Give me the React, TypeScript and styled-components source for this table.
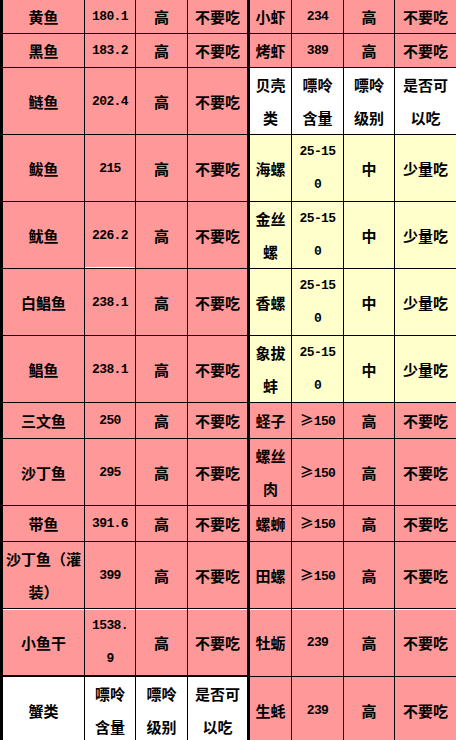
import styled, { createGlobalStyle, css } from "styled-components";

type Tone = "pink" | "yellow" | "white";

type CellData = {
    text: string;
    tone: Tone;
    num?: boolean;
    whiteTop?: boolean;
    whiteBottom?: boolean;
    thickBottom?: boolean;
};

const tones: Record<Tone, string> = {
    pink: "#ff9999",
    yellow: "#ffffcc",
    white: "#ffffff",
};

const GlobalStyle = createGlobalStyle`
    html, body {
        margin: 0;
        padding: 0;
        background: #ffffff;
    }
    * {
        box-sizing: border-box;
    }
`;

const Viewport = styled.div`
    width: 456px;
    height: 740px;
    overflow: hidden;
`;

const Sheet = styled.div`
    display: grid;
    grid-template-columns: 85px 51px 52px 62px 42px 52px 51px 62px;
    width: 457px;
    font-family: "Noto Sans CJK SC", "Noto Sans", sans-serif;
    font-weight: 700;
    font-size: 15px;
    line-height: 33px;
    color: #000;
`;

type CellProps = {
    $tone: Tone;
    $num?: boolean;
    $first?: boolean;
    $divider?: boolean;
    $whiteTop?: boolean;
    $whiteBottom?: boolean;
    $thickBottom?: boolean;
};

const Cell = styled.div<CellProps>`
    display: flex;
    align-items: center;
    justify-content: center;
    text-align: center;
    background: ${(p) => tones[p.$tone]};
    border-right: ${(p) => (p.$divider ? "3px" : "1px")} solid #000;
    border-bottom: ${(p) => (p.$thickBottom ? "2px" : "1px")} solid #000;
    padding: 0 ${(p) => (p.$num ? "5px" : p.$first ? "2px" : "4px")};
    word-break: break-all;
    line-break: anywhere;
    min-height: 34px;
    ${(p) => p.$first && css`
        border-left: 3px solid #000;
    `}
    ${(p) => p.$num && css`
        font-family: "Liberation Mono", "DejaVu Sans Mono", monospace;
        font-size: 13px;
        letter-spacing: -0.6px;
    `}
    ${(p) => p.$whiteTop && css`
        box-shadow: inset 0 1px 0 #ffffff;
    `}
    ${(p) => p.$whiteBottom && css`
        box-shadow: inset 0 -1px 0 #ffffff;
    `}
`;

const Inner = styled.span`
    display: block;
`;

const Sym = styled.span`
    font-family: "Noto Sans CJK SC", sans-serif;
    font-size: 14px;
    font-weight: 700;
    letter-spacing: 0;
`;

const fish = (name: string, value: string): CellData[] => [
    { text: name, tone: "pink" },
    { text: value, tone: "pink", num: true },
    { text: "高", tone: "pink" },
    { text: "不要吃", tone: "pink" },
];

const shell = (name: string, value: string, tone: Tone): CellData[] => [
    { text: name, tone },
    { text: value, tone, num: true },
    { text: tone === "yellow" ? "中" : "高", tone },
    { text: tone === "yellow" ? "少量吃" : "不要吃", tone },
];

const header = (kind: string): CellData[] => [
    { text: kind, tone: "white" },
    { text: "嘌呤含量", tone: "white" },
    { text: "嘌呤级别", tone: "white" },
    { text: "是否可以吃", tone: "white" },
];

const mark = (cells: CellData[], extra: Partial<CellData>, only?: number): CellData[] =>
    cells.map((c, i) => (only === undefined || only === i ? { ...c, ...extra } : c));

const rows: CellData[][] = [
    [...fish("黄鱼", "180.1"), ...shell("小虾", "234", "pink")],
    [...fish("黑鱼", "183.2"), ...shell("烤虾", "389", "pink")],
    [...fish("鲢鱼", "202.4"), ...header("贝壳类")],
    [...fish("鲅鱼", "215"), ...shell("海螺", "25-150", "yellow")],
    [...mark(fish("鱿鱼", "226.2"), { whiteBottom: true }, 1), ...shell("金丝螺", "25-150", "yellow")],
    [...fish("白鲳鱼", "238.1"), ...shell("香螺", "25-150", "yellow")],
    [...fish("鲳鱼", "238.1"), ...shell("象拔蚌", "25-150", "yellow")],
    [...fish("三文鱼", "250"), ...shell("蛏子", "≥150", "pink")],
    [...fish("沙丁鱼", "295"), ...shell("螺丝肉", "≥150", "pink")],
    [...fish("带鱼", "391.6"), ...shell("螺蛳", "≥150", "pink")],
    [...fish("沙丁鱼（灌装）", "399"), ...shell("田螺", "≥150", "pink")],
    [
        ...mark(fish("小鱼干", "1538.9"), { whiteTop: true, thickBottom: true }),
        ...mark(shell("牡蛎", "239", "pink"), { whiteTop: true }),
    ],
    [...header("蟹类"), ...shell("生蚝", "239", "pink")],
];

const renderText = (text: string) =>
    text.startsWith("≥") ? (
        <>
            <Sym>≥</Sym>
            {text.slice(1)}
        </>
    ) : (
        text
    );

export default function App() {
    return (
        <Viewport>
            <GlobalStyle />
            <Sheet>
                {rows.map((row, r) =>
                    row.map((c, i) => (
                        <Cell
                            key={`${r}-${i}`}
                            $tone={c.tone}
                            $num={c.num}
                            $first={i === 0}
                            $divider={i === 3}
                            $whiteTop={c.whiteTop}
                            $whiteBottom={c.whiteBottom}
                            $thickBottom={c.thickBottom}
                        >
                            <Inner>{renderText(c.text)}</Inner>
                        </Cell>
                    ))
                )}
            </Sheet>
        </Viewport>
    );
}
